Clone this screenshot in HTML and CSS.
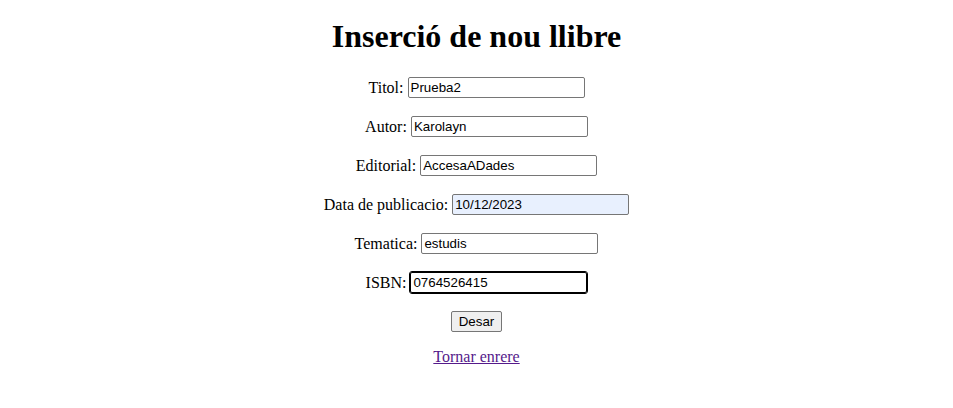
FILE: index.html
```html
<!DOCTYPE html>
<html>
<head>
<meta charset="utf-8">
<link rel="stylesheet" href="styles.css">
</head>
<body class="page">
<h1 class="title">Inserció de nou llibre</h1>
<form class="form">
<p class="row"><label class="lbl">Titol: <input class="field" type="text" value="Prueba2"></label></p>
<p class="row"><label class="lbl">Autor: <input class="field" type="text" value="Karolayn"></label></p>
<p class="row"><label class="lbl">Editorial: <input class="field" type="text" value="AccesaADades"></label></p>
<p class="row"><label class="lbl">Data de publicacio: <input class="field autofill" type="text" value="10/12/2023"></label></p>
<p class="row"><label class="lbl">Tematica: <input class="field" type="text" value="estudis"></label></p>
<p class="row"><label class="lbl">ISBN: <input class="field focused" type="text" value="0764526415"></label></p>
<p class="row"><button class="btn" type="button">Desar</button></p>
<p class="row link-row"><a class="back" href="#">Tornar enrere</a></p>
</form>
</body>
</html>
```
FILE: styles.css
```css
.page {
  margin: 8px;
  font-family: "Liberation Serif", serif;
  font-size: 16px;
  text-align: center;
  color: #000;
  background: #fff;
}
.title {
  font-size: 32px;
  font-weight: bold;
  margin: 10px 0 21px;
}
.row {
  margin: 16px 0;
  height: 23px;
  display: flex;
  justify-content: center;
  align-items: center;
}
.lbl {
  display: flex;
  align-items: center;
  gap: 4px;
}
.link-row {
  height: 15px;
}
.field {
  font-family: "Liberation Sans", Arial, sans-serif;
  font-size: 13.333px;
  width: 177px;
  height: 21px;
  box-sizing: border-box;
  padding: 1px 2px;
  border: 1px solid #767676;
  border-radius: 2px;
  background: #fff;
  color: #000;
  margin: 0;
}
.autofill {
  background: #e8f0fe;
}
.focused {
  border: 1px solid #000;
  outline: 1px solid #000;
}
.btn {
  font-family: "Liberation Sans", Arial, sans-serif;
  font-size: 13.333px;
  height: 21px;
  padding: 1px 7px;
  border: 1px solid #767676;
  border-radius: 2px;
  background: #efefef;
  color: #000;
}
.back {
  color: #551a8b;
}
```
